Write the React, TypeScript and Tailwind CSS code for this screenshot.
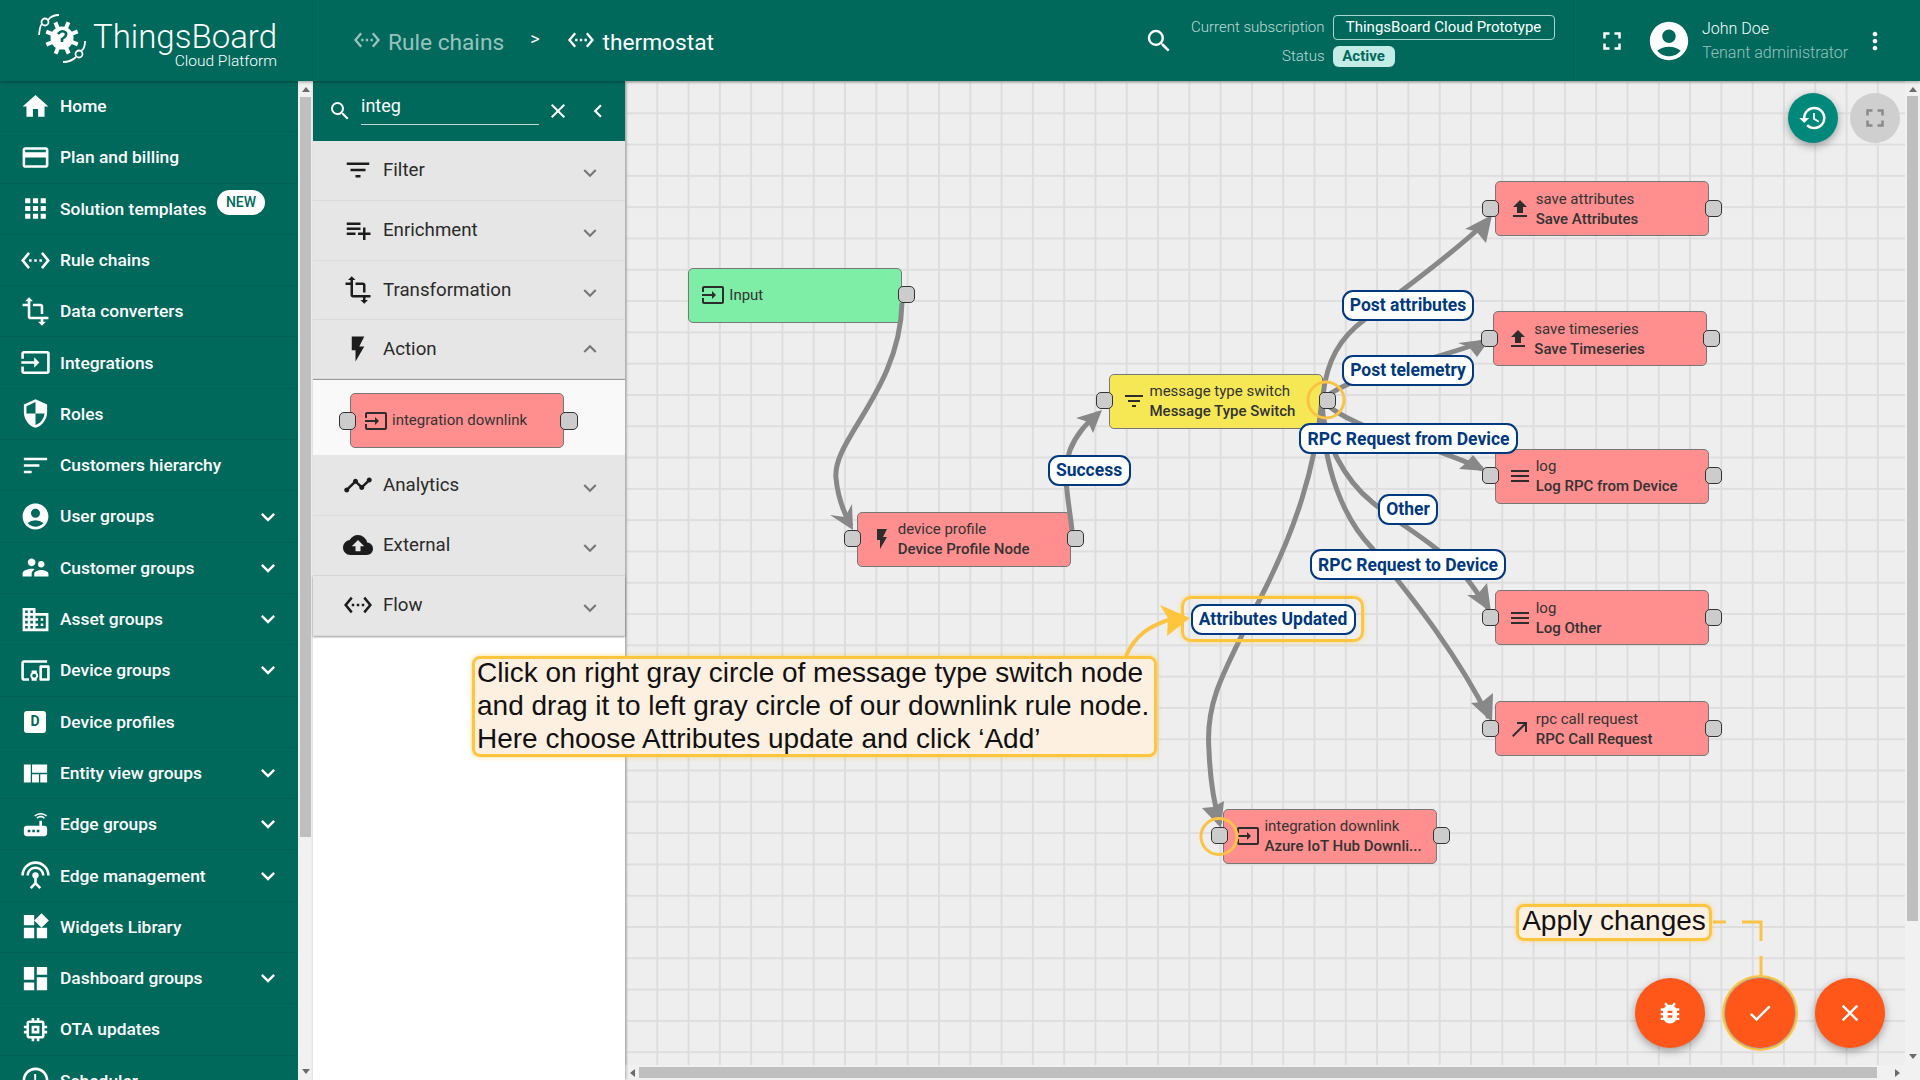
import React from 'react';
import {
  MdHome, MdCreditCard, MdApps, MdSettingsEthernet, MdTransform, MdInput, MdSecurity, MdSort,
  MdAccountCircle, MdSupervisorAccount, MdDomain, MdDevicesOther, MdViewQuilt, MdRouter,
  MdSettingsInputAntenna, MdWidgets, MdDashboard, MdMemory, MdSchedule, MdExpandMore, MdExpandLess,
  MdSearch, MdClose, MdChevronLeft, MdFilterList, MdPlaylistAdd, MdFlashOn, MdTimeline, MdCloudUpload,
  MdFileUpload, MdMenu, MdCallMade, MdHistory, MdFullscreen, MdMoreVert, MdBugReport, MdCheck,
} from 'react-icons/md';

const ROBOTO = "font-[family-name:Roboto,sans-serif]";
const ARIAL = "font-[family-name:'Liberation_Sans',Arial,sans-serif]";

type SideItem = { label: string; icon?: React.ComponentType<{ size?: number; className?: string }>; arrow?: boolean; badge?: boolean; deviceProfile?: boolean };

const sideItems: SideItem[] = [
  { label: 'Home', icon: MdHome },
  { label: 'Plan and billing', icon: MdCreditCard },
  { label: 'Solution templates', icon: MdApps, badge: true },
  { label: 'Rule chains', icon: MdSettingsEthernet },
  { label: 'Data converters', icon: MdTransform },
  { label: 'Integrations', icon: MdInput },
  { label: 'Roles', icon: MdSecurity },
  { label: 'Customers hierarchy', icon: MdSort },
  { label: 'User groups', icon: MdAccountCircle, arrow: true },
  { label: 'Customer groups', icon: MdSupervisorAccount, arrow: true },
  { label: 'Asset groups', icon: MdDomain, arrow: true },
  { label: 'Device groups', icon: MdDevicesOther, arrow: true },
  { label: 'Device profiles', deviceProfile: true },
  { label: 'Entity view groups', icon: MdViewQuilt, arrow: true },
  { label: 'Edge groups', icon: MdRouter, arrow: true },
  { label: 'Edge management', icon: MdSettingsInputAntenna, arrow: true },
  { label: 'Widgets Library', icon: MdWidgets },
  { label: 'Dashboard groups', icon: MdDashboard, arrow: true },
  { label: 'OTA updates', icon: MdMemory },
  { label: 'Scheduler', icon: MdSchedule },
];

const CANVAS_X = 625;
const CANVAS_Y = 81;

type NodeData = { x: number; y: number; color: string; icon: React.ComponentType<{ size?: number; className?: string }>; top: string; bottom?: string; noLeft?: boolean };

const RED = '#ff8f8f';
const nodes: NodeData[] = [
  { x: 688.3, y: 267.9, color: '#7eeda6', icon: MdInput, top: 'Input', noLeft: true },
  { x: 856.7, y: 511.5, color: RED, icon: MdFlashOn, top: 'device profile', bottom: 'Device Profile Node' },
  { x: 1108.5, y: 373.8, color: '#f6e854', icon: MdFilterList, top: 'message type switch', bottom: 'Message Type Switch' },
  { x: 1494.7, y: 181.3, color: RED, icon: MdFileUpload, top: 'save attributes', bottom: 'Save Attributes' },
  { x: 1493.3, y: 311.3, color: RED, icon: MdFileUpload, top: 'save timeseries', bottom: 'Save Timeseries' },
  { x: 1494.7, y: 448.9, color: RED, icon: MdMenu, top: 'log', bottom: 'Log RPC from Device' },
  { x: 1494.7, y: 590.3, color: RED, icon: MdMenu, top: 'log', bottom: 'Log Other' },
  { x: 1494.7, y: 701.3, color: RED, icon: MdCallMade, top: 'rpc call request', bottom: 'RPC Call Request' },
  { x: 1223.4, y: 808.9, color: RED, icon: MdInput, top: 'integration downlink', bottom: 'Azure IoT Hub Downli...' },
];

const labels = [
  { text: 'Post attributes', x: 1342, y: 289.5, w: 132 },
  { text: 'Post telemetry', x: 1342, y: 354.5, w: 132 },
  { text: 'RPC Request from Device', x: 1299, y: 423.3, w: 219 },
  { text: 'Other', x: 1378, y: 493.8, w: 60 },
  { text: 'RPC Request to Device', x: 1310, y: 549.3, w: 196 },
  { text: 'Attributes Updated', x: 1190.5, y: 603.5, w: 165 },
  { text: 'Success', x: 1047.5, y: 454.5, w: 83 },
];

const edges = [
  'M902 303 C900 390 832 440 836 478 C838 500 845 515 851 526',
  'M1072 530 C1068 495 1062 475 1070 450 C1076 435 1085 425 1098 413',
  'M1323 395 C1327 360 1340 338 1364 320 C1390 298 1440 265 1486 222',
  'M1325 398 C1350 375 1420 365 1482 342',
  'M1322 400 C1350 430 1420 440 1482 469',
  'M1322 400 C1322 440 1345 480 1372 502 C1400 525 1430 540 1455 565 C1470 580 1478 595 1488 608',
  'M1322 400 C1322 470 1345 520 1372 548 C1395 578 1450 640 1489 718',
  'M1322 400 C1315 470 1295 530 1262 595 C1225 670 1205 700 1209 750 C1210 780 1213 800 1220 824',
];

const heads = [
  '853,530 830,515 845,517 852,504',
  '1102,410 1076,418 1088,422 1093,433',
  '1492,215 1465,229 1476,231 1486,243',
  '1490,339 1458,343 1469,347 1477,357',
  '1486,471 1459,469 1466,463 1473,455',
  '1491,612 1467,595 1477,595 1487,583',
  '1492,722 1471,703 1482,702 1493,693',
  '1221,828 1202,808 1213,807 1224,801',
];

function Connector({ x, y }: { x: number; y: number }) {
  return (
    <div
      className="absolute w-[17px] h-[17px] rounded-[5px] bg-[#cccccc] border border-[#333333]"
      style={{ left: x - CANVAS_X, top: y - CANVAS_Y }}
    />
  );
}

function RuleNode({ n }: { n: NodeData }) {
  const Icon = n.icon;
  return (
    <div
      className="absolute w-[214px] h-[55px] rounded-[5px] border border-[#777777] flex items-center pl-[12px] text-[#333333]"
      style={{ left: n.x - CANVAS_X, top: n.y - CANVAS_Y, backgroundColor: n.color }}
    >
      <Icon size={24} className="shrink-0 text-[#2d2d2d]" />
      <div className={`ml-[4px] ${ROBOTO} text-[15px] leading-[20px] whitespace-nowrap`}>
        <div>{n.top}</div>
        {n.bottom && <div className="font-medium">{n.bottom}</div>}
      </div>
    </div>
  );
}

function Logo() {
  const spikes = Array.from({ length: 8 }, (_, i) => i * 45);
  return (
    <svg width="50" height="50" viewBox="0 0 50 50" className="shrink-0">
      <g fill="#fff">
        <circle cx="25" cy="25" r="11.5" />
        {spikes.map((a) => (
          <rect key={a} x="23" y="8" width="4" height="8" transform={`rotate(${a + 22} 25 25)`} />
        ))}
      </g>
      <path d="M21 21 q4 -5 8 -1 q1 3 -4 6 v3" fill="none" stroke="#00695c" strokeWidth="2.6" />
      <g fill="none" stroke="#fff" strokeWidth="1.8">
        <circle cx="8" cy="9" r="3.5" />
        <path d="M2 22 Q3 12 5 11 M11 7 Q15 2 22 2" />
        <circle cx="42" cy="41" r="3.5" />
        <path d="M48 28 Q48 36 44 38 M39 44 Q34 49 26 49" />
      </g>
    </svg>
  );
}

function Triangle({ dir }: { dir: 'up' | 'down' | 'left' | 'right' }) {
  const pts = { up: '0,5 4,0 8,5', down: '0,0 8,0 4,5', left: '5,0 5,8 0,4', right: '0,0 0,8 5,4' }[dir];
  const horizontal = dir === 'left' || dir === 'right';
  return (
    <svg width={horizontal ? 5 : 8} height={horizontal ? 8 : 5} viewBox={horizontal ? '0 0 5 8' : '0 0 8 5'}>
      <polygon points={pts} fill="#6b6b6b" />
    </svg>
  );
}

function Category({ icon: Icon, label, open, h }: { icon: React.ComponentType<{ size?: number; className?: string }>; label: string; open?: boolean; h: string }) {
  return (
    <div className={`${h} shrink-0 flex items-center pl-[30px] pr-[22px] bg-[#e6e6e6] border-b border-[#dbdbdb]`}>
      <Icon size={30} className="text-[#1c1c1c]" />
      <span className={`ml-[10px] flex-1 ${ROBOTO} text-[18.7px] text-[#2a2a2a]`}>{label}</span>
      {open ? <MdExpandLess size={26} className="text-[#777777]" /> : <MdExpandMore size={26} className="text-[#777777] translate-y-[3px]" />}
    </div>
  );
}

export default function App() {
  return (
    <div className={`relative w-[1920px] h-[1080px] overflow-hidden flex flex-col bg-white ${ROBOTO}`}>
      {/* Top bar */}
      <header className="h-[81px] shrink-0 bg-[#00695c] flex items-stretch text-white shadow-[0_1px_3px_rgba(0,0,0,0.35)] z-20">
        <div className="w-[313px] shrink-0 flex items-start pl-[37px] pt-[13px] border-r border-[#005f53]">
          <Logo />
          <div className="ml-[6px] flex flex-col items-end w-[184px]">
            <span className="mt-[7px] text-[33px] font-light leading-[34px]">ThingsBoard</span>
            <span className="text-[15.5px] font-light leading-[14px]">Cloud Platform</span>
          </div>
        </div>
        <div className="flex-1 flex items-center pl-[40px]">
          <MdSettingsEthernet size={28} className="text-white/60 -translate-y-[1px]" />
          <span className="ml-[7px] text-[22.7px] text-white/60 translate-y-[3px]">Rule chains</span>
          <span className="ml-[26px] text-[18px] -translate-y-[2px]">&gt;</span>
          <MdSettingsEthernet size={28} className="ml-[27px] -translate-y-[1px]" />
          <span className="ml-[8px] text-[22.7px] translate-y-[3px]">thermostat</span>
          <div className="flex-1" />
          <MdSearch size={30} className="mr-[10px]" />
          <div className="w-[389px] grid grid-cols-[auto_auto] justify-start items-center gap-x-[8px] gap-y-[6px] text-[15px] pl-[7px]">
            <span className="text-right text-white/75 font-light leading-[20px]">Current subscription</span>
            <span className="w-[222px] h-[25px] rounded-[4px] border border-[#a6d8d0] flex items-center justify-center leading-none">ThingsBoard Cloud Prototype</span>
            <span className="text-right text-white/75 font-light leading-[20px]">Status</span>
            <span className="w-[62px] h-[21px] rounded-[6px] bg-[#c4ece6] text-[#00695c] font-bold flex items-center justify-center leading-none">Active</span>
          </div>
          <div className="self-stretch w-px bg-[#005f53]" />
          <MdFullscreen size={30} className="ml-[23px]" />
          <MdAccountCircle size={46} className="ml-[19px]" />
          <div className="ml-[10px] flex flex-col w-[156px] text-[16px] font-light leading-[24px]">
            <span>John Doe</span>
            <span className="text-white/60">Tenant administrator</span>
          </div>
          <MdMoreVert size={28} className="ml-[3px] mr-[31px]" />
        </div>
      </header>

      <div className="flex-1 flex min-h-0">
        {/* Sidebar */}
        <nav className="w-[298px] shrink-0 bg-[#00695c] overflow-hidden text-white">
          {sideItems.map((it) => {
            const Icon = it.icon;
            return (
              <div key={it.label} className="h-[51.3px] flex items-center pl-[23px] pr-[20px] border-b border-[#00625a]">
                <span className="w-[24px] h-[24px] flex items-center justify-center shrink-0">
                  {it.deviceProfile ? (
                    <span className="w-[22px] h-[22px] rounded-[3px] bg-white text-[#00695c] text-[14px] font-bold flex items-center justify-center">D</span>
                  ) : (
                    Icon && <span className="shrink-0"><Icon size={31} /></span>
                  )}
                </span>
                <span className="ml-[13px] flex-1 text-[17.4px] font-medium whitespace-nowrap">{it.label}</span>
                {it.badge && (
                  <span className="absolute left-[217px] mt-[-13px] w-[48px] h-[25px] rounded-full bg-white text-[#00695c] text-[14px] font-medium flex items-center justify-center">NEW</span>
                )}
                {it.arrow && <MdExpandMore size={28} className="-mr-[4px]" />}
              </div>
            );
          })}
        </nav>

        {/* Sidebar scrollbar */}
        <div className="w-[15px] shrink-0 bg-[#f1f1f1] flex flex-col items-center py-[6px]">
          <Triangle dir="up" />
          <div className="w-[11px] h-[740px] bg-[#bfbfbf] mt-[5px]" />
          <div className="flex-1" />
          <Triangle dir="down" />
        </div>

        {/* Library panel */}
        <aside className="w-[312px] shrink-0 bg-white flex flex-col shadow-[1px_0_3px_rgba(0,0,0,0.3)] z-10">
          <div className="h-[60px] shrink-0 bg-[#00695c] flex items-center text-white pl-[15px]">
            <MdSearch size={24} />
            <div className="ml-[9px] w-[178px] h-[36px] border-b border-[#b6dcd6] text-[18px] leading-[34px] -translate-y-[4px]">integ</div>
            <MdClose size={24} className="ml-[7px]" />
            <MdChevronLeft size={26} className="ml-[15px]" />
          </div>
          <Category h="h-[59.8px]" icon={MdFilterList} label="Filter" />
          <Category h="h-[59.8px]" icon={MdPlaylistAdd} label="Enrichment" />
          <Category h="h-[59.8px]" icon={MdTransform} label="Transformation" />
          <Category h="h-[58.8px]" icon={MdFlashOn} label="Action" open />
          <div className="h-[76px] shrink-0 bg-[#f9f9f9] border-t border-[#999999] pt-[13px] pl-[37px]">
            <div className="relative w-[214px] h-[55px] rounded-[5px] border border-[#777777] bg-[#ff8f8f] flex items-center pl-[13px] text-[#333333]">
              <MdInput size={24} className="text-[#2d2d2d]" />
              <span className="ml-[4px] text-[15px] whitespace-nowrap">integration downlink</span>
              <div className="absolute left-[-12px] top-[18px] w-[17px] h-[18px] rounded-[5px] bg-[#cccccc] border border-[#333333]" />
              <div className="absolute left-[209px] top-[18px] w-[18px] h-[18px] rounded-[5px] bg-[#cccccc] border border-[#333333]" />
            </div>
          </div>
          <Category h="h-[60.8px]" icon={MdTimeline} label="Analytics" />
          <Category h="h-[59.8px]" icon={MdCloudUpload} label="External" />
          <div className="shadow-[0_1px_2px_rgba(0,0,0,0.4)]">
            <Category h="h-[59.8px]" icon={MdSettingsEthernet} label="Flow" />
          </div>
        </aside>

        {/* Canvas */}
        <main className="relative flex-1 overflow-hidden bg-[#eeeeee] bg-[linear-gradient(to_right,#dddddd_2px,transparent_2px),linear-gradient(to_bottom,#dedede_2px,transparent_2px)] bg-[size:31.3px_31.3px]">
          {nodes.map((n) => (
            <RuleNode key={n.top + n.x + n.y} n={n} />
          ))}

          <svg className="absolute left-0 top-0 pointer-events-none" width={1295} height={999} viewBox={`${CANVAS_X} ${CANVAS_Y} 1295 999`}>
            <g fill="none" stroke="#888888" strokeWidth="5">
              {edges.map((d) => (
                <path key={d} d={d} />
              ))}
            </g>
            <g fill="#888888">
              {heads.map((p) => (
                <polygon key={p} points={p} />
              ))}
            </g>
          </svg>

          {nodes.map((n) => (
            <React.Fragment key={'c' + n.x + n.y}>
              {!n.noLeft && <Connector x={n.x - 12.6} y={n.y + 18.5} />}
              <Connector x={n.x + 210} y={n.y + 18.5} />
            </React.Fragment>
          ))}

          {labels.map((l) => (
            <div
              key={l.text}
              className="absolute h-[31px] rounded-[11px] border-2 border-[#00397f] bg-white text-[#00397f] text-[17.5px] font-bold flex items-center justify-center whitespace-nowrap"
              style={{ left: l.x - CANVAS_X, top: l.y - CANVAS_Y, width: l.w }}
            >
              {l.text}
            </div>
          ))}

          {/* Zoom buttons */}
          <div className="absolute right-[20px] top-[12px] flex gap-[12px]">
            <div className="w-[50px] h-[50px] rounded-full bg-[#00897b] text-white flex items-center justify-center shadow-[0_3px_8px_rgba(0,0,0,0.35)]">
              <MdHistory size={30} />
            </div>
            <div className="w-[50px] h-[50px] rounded-full bg-[#cfcfcf] text-[#8a8a8a] flex items-center justify-center">
              <MdFullscreen size={30} />
            </div>
          </div>

          {/* Action buttons */}
          <div className="absolute right-[35px] bottom-[32px] flex gap-[20px] text-white">
            <div className="w-[70px] h-[70px] rounded-full bg-[#ff5719] flex items-center justify-center shadow-[0_3px_8px_rgba(0,0,0,0.35)]">
              <MdBugReport size={28} />
            </div>
            <div className="w-[70px] h-[70px] rounded-full bg-[#ff5719] flex items-center justify-center shadow-[0_0_0_1px_#aaa,0_0_0_3px_#ffc63d]">
              <MdCheck size={28} />
            </div>
            <div className="w-[70px] h-[70px] rounded-full bg-[#ff5719] flex items-center justify-center shadow-[0_3px_8px_rgba(0,0,0,0.35)]">
              <MdClose size={28} />
            </div>
          </div>

          {/* Canvas scrollbars */}
          <div className="absolute right-0 top-0 bottom-0 w-[15px] bg-[#f1f1f1] flex flex-col items-center py-[6px]">
            <Triangle dir="up" />
            <div className="w-[11px] h-[825px] bg-[#bfbfbf] mt-[4px]" />
            <div className="flex-1" />
            <Triangle dir="down" />
            <div className="h-[15px]" />
          </div>
          <div className="absolute left-0 right-0 bottom-0 h-[15px] bg-[#f1f1f1] flex items-center pl-[5px] pr-[20px]">
            <Triangle dir="left" />
            <div className="ml-[4px] w-[1238px] h-[11px] bg-[#bfbfbf]" />
            <div className="flex-1" />
            <Triangle dir="right" />
          </div>
        </main>
      </div>

      {/* Annotation overlay */}
      <svg className="absolute left-0 top-0 pointer-events-none z-30" width={1920} height={1080}>
        <g fill="none" stroke="#fcc244">
          <circle cx="1326" cy="400" r="18" strokeWidth="3" />
          <circle cx="1219" cy="836.5" r="18" strokeWidth="3" />
          <path d="M1126 656 C1135 635 1150 625 1175 618" strokeWidth="4" />
          <path d="M1713 922 H1726 M1742 922 H1761 V941 M1761 956 V976" strokeWidth="3" />
        </g>
        <polygon points="1190,618 1160,605 1168,618 1167,636" fill="#ffc63d" />
      </svg>
      <div className="absolute left-[1181px] top-[596px] w-[183px] h-[46px] rounded-[10px] border-[3px] border-[#ffc63d] shadow-[0_0_4px_rgba(255,198,61,0.6)] z-30" />
      <div className={`absolute left-[472px] top-[656px] w-[685px] h-[101px] rounded-[8px] border-[3px] border-[#ffc63d] bg-[#fdf0e0] pl-[2px] ${ARIAL} text-[28px] leading-[33px] text-[#111111] whitespace-nowrap shadow-[0_0_5px_rgba(255,198,61,0.6)] z-30`}>
        <div className="-translate-y-[3px]">Click on right gray circle of message type switch node</div>
        <div className="-translate-y-[3px]">and drag it to left gray circle of our downlink rule node.</div>
        <div className="-translate-y-[3px]">Here choose Attributes update and click ‘Add’</div>
      </div>
      <div className={`absolute left-[1516px] top-[904px] w-[196px] h-[37px] rounded-[8px] border-[3px] border-[#ffc63d] bg-[#fdf0e0] ${ARIAL} text-[28px] leading-[28px] text-center text-[#111111] whitespace-nowrap shadow-[0_0_4px_rgba(255,198,61,0.6)] z-30`}>
        Apply changes
      </div>
    </div>
  );
}
